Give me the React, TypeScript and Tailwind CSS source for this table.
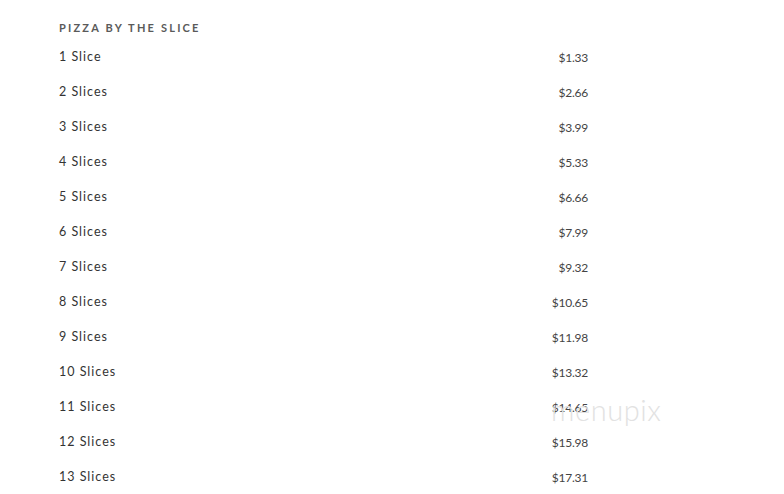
const items = [
  ["1 Slice", "$1.33"],
  ["2 Slices", "$2.66"],
  ["3 Slices", "$3.99"],
  ["4 Slices", "$5.33"],
  ["5 Slices", "$6.66"],
  ["6 Slices", "$7.99"],
  ["7 Slices", "$9.32"],
  ["8 Slices", "$10.65"],
  ["9 Slices", "$11.98"],
  ["10 Slices", "$13.32"],
  ["11 Slices", "$14.65"],
  ["12 Slices", "$15.98"],
  ["13 Slices", "$17.31"],
];

export default function App() {
  return (
    <div className="relative w-[784px] h-[494px] overflow-hidden bg-white font-['Lato',sans-serif]">
      <div className="w-[588px] pl-[59px] pt-[21px]">
        <h2 className="text-[11px] leading-[14px] font-bold tracking-[0.2em] text-[#5a5a5a] uppercase">
          Pizza by the slice
        </h2>
        <ul className="mt-[11px]">
          {items.map(([name, price]) => (
            <li key={name} className="flex justify-between h-[35px]">
              <span className="text-[12.5px] tracking-[0.08em] text-[#333] mt-[2px]">{name}</span>
              <span className="text-[12px] tracking-[-0.02em] text-[#444] mt-[3px]">{price}</span>
            </li>
          ))}
        </ul>
      </div>
      <div className="absolute left-[551px] top-[388px] text-[29px] font-light text-[#e2e2e2] tracking-[0.02em] pointer-events-none">
        menupix
      </div>
    </div>
  );
}
